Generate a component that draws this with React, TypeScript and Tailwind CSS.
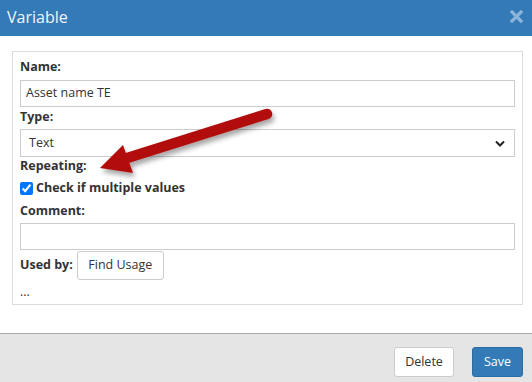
import React from "react";

const font = { fontFamily: '"Open Sans", "Liberation Sans", sans-serif' };

function Label({ children, className = "" }: { children: React.ReactNode; className?: string }) {
  return (
    <div className={`h-[18px] text-[12.5px] leading-[18px] font-bold text-[#333] ${className}`}>
      {children}
    </div>
  );
}

export default function App() {
  return (
    <div className="relative w-[532px] h-[382px] flex flex-col bg-white overflow-hidden" style={font}>
      {/* header */}
      <div className="h-9 shrink-0 bg-[#337ab7] pl-[7px] pr-[9px] flex items-center justify-between">
        <span className="text-[16px] leading-none text-[#f2f6fa] -mt-[2px]">Variable</span>
        <svg width="13" height="13" viewBox="0 0 13 13" className="-mt-[4px]">
          <path d="M2 2 L11 11 M11 2 L2 11" stroke="#8db5dc" strokeWidth="3.2" strokeLinecap="square" />
        </svg>
      </div>

      {/* body */}
      <div className="flex-1 pl-3 pr-[9px] pt-[15px]">
        <div className="border border-[#ddd] px-[7px] pt-[6px] pb-[3px]">
          <Label className="mb-[4px]">Name:</Label>
          <div className="h-[27px] border border-[#ccc] pl-[5px] flex items-center text-[12.5px] text-[#333]">
            Asset name TE
          </div>

          <Label className="mt-[1px] mb-[3px]">Type:</Label>
          <div className="h-[28px] border border-[#ccc] pl-[8px] pr-[9px] flex items-center justify-between text-[12.5px] text-[#333]">
            <span>Text</span>
            <svg width="10" height="7" viewBox="0 0 10 7">
              <path d="M1 1.5 L5 5.5 L9 1.5" fill="none" stroke="#222" strokeWidth="2" />
            </svg>
          </div>

          <Label>Repeating:</Label>
          <label className="mt-[4px] h-[18px] flex items-center gap-[3px] text-[12.5px] font-bold text-[#333]">
            <input type="checkbox" defaultChecked className="w-[13px] h-[13px] m-0" />
            Check if multiple values
          </label>

          <Label className="mt-[5px] mb-[3px]">Comment:</Label>
          <div className="h-[27px] border border-[#ccc]" />

          <div className="mt-[1px] h-[29px] flex items-center gap-[4px]">
            <span className="text-[12.5px] font-bold text-[#333]">Used by:</span>
            <button className="h-[29px] w-[87px] border border-[#ccc] rounded-[3px] bg-white text-[12.5px] text-[#333]">
              Find Usage
            </button>
          </div>

          <div className="mt-[3px] h-[18px] text-[12.5px] leading-[18px] text-[#333]">...</div>
        </div>
      </div>

      {/* footer */}
      <div className="h-[49px] shrink-0 border-t border-[#aaa] bg-[#e5e5e5] pt-[13px] pr-[9px] flex justify-end items-start gap-[18px]">
        <button className="h-[30px] w-[60px] border border-[#ccc] rounded-[3px] bg-white text-[12.5px] text-[#333]">
          Delete
        </button>
        <button className="h-[30px] w-[51px] border border-[#2e6da4] rounded-[3px] bg-[#337ab7] text-[12.5px] text-white">
          Save
        </button>
      </div>

      {/* annotation arrow */}
      <svg className="absolute left-0 top-0 pointer-events-none" width="532" height="382">
        <defs>
          <filter id="sh" x="-20%" y="-50%" width="140%" height="200%">
            <feDropShadow dx="2" dy="4" stdDeviation="2.5" floodColor="#000" floodOpacity="0.35" />
          </filter>
        </defs>
        <g filter="url(#sh)" fill="#b10d0d">
          <line x1="267" y1="114" x2="124" y2="159" stroke="#b10d0d" strokeWidth="10.5" strokeLinecap="round" />
          <polygon points="100,168 123,145 133,173" />
        </g>
      </svg>
    </div>
  );
}
